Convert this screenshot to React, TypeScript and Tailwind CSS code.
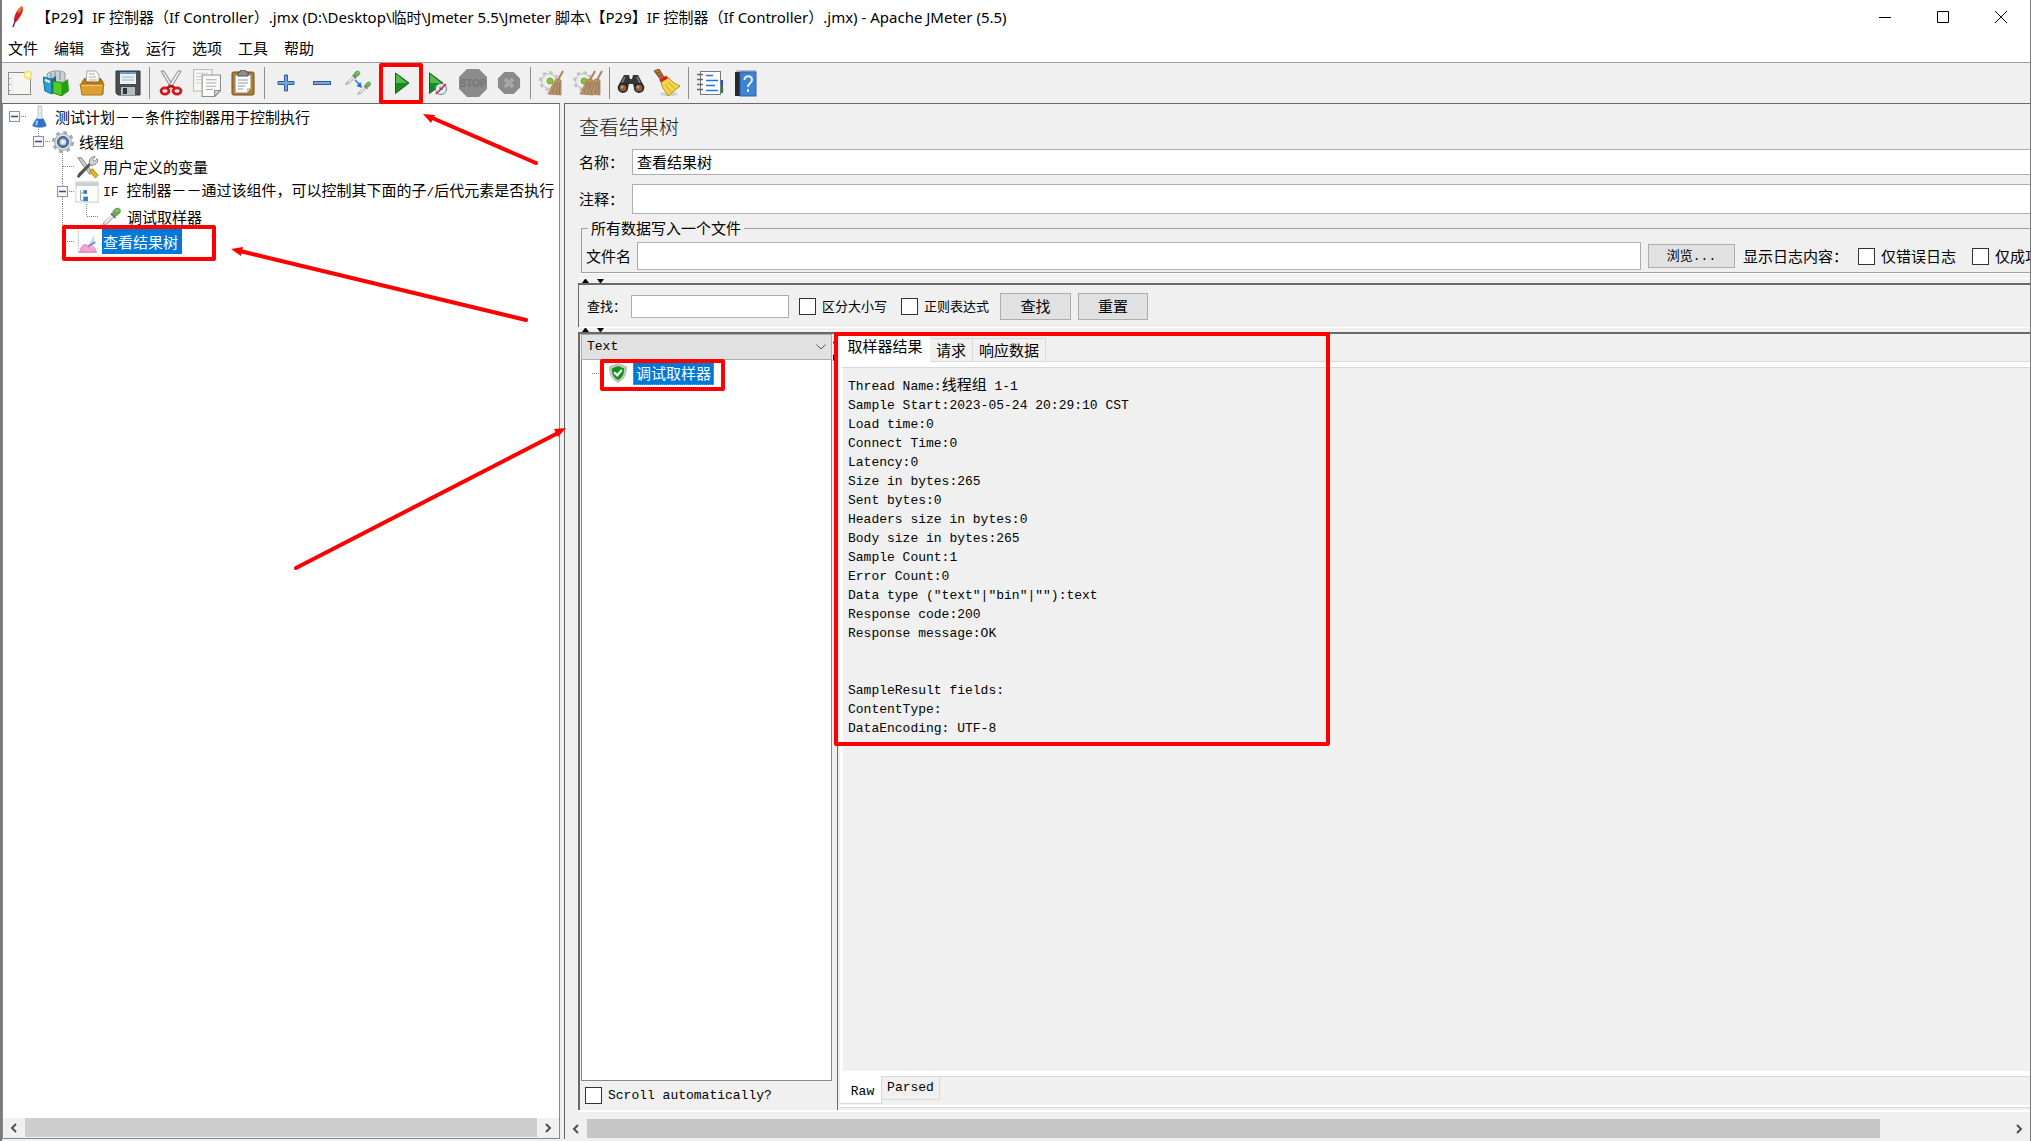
import React, { useState } from 'react'

const UI_FONT = "font-['Noto_Sans_CJK_SC',sans-serif]"
const MONO = "font-['Liberation_Mono','Noto_Sans_CJK_SC',monospace] text-[13px]"

const menus = ['文件', '编辑', '查找', '运行', '选项', '工具', '帮助']

/* ---------- toolbar icons ---------- */

const Svg = ({ size = 26, children }: { size?: number; children: React.ReactNode }) => (
  <svg width={size} height={size} viewBox="0 0 26 26" fill="none" aria-hidden="true">
    {children}
  </svg>
)

const Dropper = ({ x = 0, y = 0, s = 1 }: { x?: number; y?: number; s?: number }) => (
  <g transform={`translate(${x} ${y}) scale(${s})`}>
    <path d="M1 21 L3 17 L13 8 L15 10 L6 19 Z" fill="#d4d8d6" stroke="#8f9592" strokeWidth="1" />
    <path d="M5 17 L12 10" stroke="#fff" strokeWidth="1.4" />
    <path d="M11 7 L16 12" stroke="#6f7571" strokeWidth="2" />
    <path d="M13 8 C12 4 17 0 20 2 C23 4 20 9 15 10 Z" fill="#6bab58" stroke="#4d8641" strokeWidth=".8" />
    <path d="M16 5 L19 3.500" stroke="#b2d9a6" strokeWidth="1.200" />
  </g>
)

const Broom = ({ x = 0 }: { x?: number }) => (
  <g transform={`translate(${x} 0)`}>
    <path d="M24 1 L19 10" stroke="#a8835c" strokeWidth="2" />
    <path d="M17 9 L22 10 L22 25 L9 24 C12 19 13 14 17 9 Z" fill="#b9946b" stroke="#a3805a" strokeWidth=".8" />
    <path d="M17 12 L13 23 M19 12 L17 24 M21 12 L20 24" stroke="#8f6e4b" strokeWidth=".8" />
  </g>
)

const Gear = () => (
  <g>
    <circle cx="10" cy="11" r="7.500" fill="#e6e7e5" stroke="#c4c6c2" />
    <circle cx="10" cy="11" r="8.500" stroke="#c3c5c1" strokeWidth="3" strokeDasharray="3.400 3.270" />
    <circle cx="10" cy="11" r="6" fill="#eeefed" />
    <circle cx="11" cy="11" r="3" fill="#8cc63a" stroke="#74a233" />
  </g>
)

const NewIcon = () => (
  <Svg>
    <rect x="1.500" y="2.500" width="22" height="22" fill="#f5f5f4" stroke="#8a8c88" />
    <path d="M5 4v19" stroke="#e2e2e0" />
    <path d="M3 8v1M3 14v1M3 20v1" stroke="#666" />
    <circle cx="21" cy="5" r="4" fill="#f7ee88" stroke="#ebdf62" />
    <circle cx="21" cy="5" r="1.800" fill="#fffde0" />
  </Svg>
)

const TemplatesIcon = () => (
  <Svg>
    <path d="M4 4 C8 0 19 0 22 3 L22 12 L4 12 Z" fill="#c9d2d4" stroke="#8e999c" />
    <path d="M8 3v8M12 2v9M17 2v8" stroke="#7c898d" />
    <path d="M0 7 L8 9 L9 24 L2 21 Z" fill="#2f9ed0" stroke="#136b9b" />
    <path d="M8 9 L13 6 L13 22 L9 24 Z" fill="#176fa5" />
    <path d="M2 10 L7 12" stroke="#fff" strokeWidth="2" />
    <path d="M10 11 L19 13 L19 26 L10 23 Z" fill="#52cb27" stroke="#258b12" />
    <path d="M19 13 L25 9 L26 21 L19 26 Z" fill="#2b9a17" />
  </Svg>
)

const OpenIcon = () => (
  <Svg>
    <path d="M7 12 L8 1 L17 1 L20 5 L20 13 Z" fill="#fff" stroke="#a5a5a5" />
    <path d="M10 4h6M10 7h7M10 10h8" stroke="#aaa" />
    <path d="M3 12 L6 8 L7 12 L20 12 L21 8 L24 12 L24 24 L3 24 Z" fill="#b97f16" stroke="#936008" />
    <path d="M1 14 H25 L23 25 H3 Z" fill="#dca032" stroke="#ae7610" />
    <path d="M3 15.500H23" stroke="#f0c979" />
  </Svg>
)

const SaveIcon = () => (
  <Svg>
    <path d="M1 1 H25 V25 H3 L1 23 Z" fill="#4a4e53" stroke="#303336" />
    <rect x="5" y="2" width="16" height="12" fill="#e9f1f7" />
    <path d="M5 3h16" stroke="#6b9bcc" strokeWidth="2" />
    <path d="M7 7h12M7 10h12" stroke="#9db4c9" />
    <rect x="6" y="17" width="14" height="8" fill="#b7babc" />
    <rect x="8" y="18" width="4" height="6" fill="#303336" />
  </Svg>
)

const CutIcon = () => (
  <Svg>
    <path d="M3 1 L6 1 L16 17 L13 18 Z" fill="#e4e5e4" stroke="#858885" />
    <path d="M23 1 L20 1 L10 17 L13 18 Z" fill="#f3f3f2" stroke="#858885" />
    <ellipse cx="7" cy="21" rx="4" ry="3.200" stroke="#d01919" strokeWidth="2.800" />
    <ellipse cx="19" cy="21" rx="4" ry="3.200" stroke="#d01919" strokeWidth="2.800" />
    <path d="M9 18 L12 16 H14 L17 18" stroke="#c31414" strokeWidth="2.400" />
  </Svg>
)

const CopyIcon = () => (
  <Svg size={28}>
    <rect x=".500" y=".500" width="17" height="20" fill="#f7f7f6" stroke="#bcbcba" />
    <path d="M3 4h11M3 7h6M3 10h5M3 13h5" stroke="#ccc" />
    <path d="M8.500 5.500 H25.500 V20 L20 25.500 H8.500 Z" fill="#fafafa" stroke="#8d8f8b" />
    <path d="M12 10h10M12 13h10M12 16h9M12 19h6" stroke="#a9aaa8" />
    <path d="M20 25.500 V20 H25.500 Z" fill="#d4d5d3" stroke="#8d8f8b" />
  </Svg>
)

const PasteIcon = () => (
  <Svg>
    <rect x="2" y="2" width="22" height="23" rx="1.500" fill="#b77c28" stroke="#754b0e" />
    <path d="M5 5 H21 V18 L17 23 H5 Z" fill="#fbfbfa" stroke="#888" />
    <path d="M8 10h10M8 13h10M8 16h7M8 19h5" stroke="#999" />
    <path d="M8 2 H10 L11 0 H15 L16 2 H18 V6 H8 Z" fill="#8d908d" stroke="#555" />
    <path d="M17 23V18H21Z" fill="#ccc" />
  </Svg>
)

const PlusIcon = () => (
  <Svg>
    <path d="M11.500 5h3v6.500h6.500v3h-6.500v6.500h-3v-6.500H5v-3h6.500z" fill="#7ba4d6" stroke="#2f5e9f" />
  </Svg>
)

const MinusIcon = () => (
  <Svg>
    <rect x="4.500" y="11.500" width="17" height="3" fill="#7ba4d6" stroke="#2f5e9f" />
  </Svg>
)

const ToggleIcon = () => (
  <Svg>
    <Dropper x={0} y={0} s={0.7} />
    <Dropper x={12} y={11} s={0.65} />
    <path d="M10 10 L15 15" stroke="#2c7be8" strokeWidth="1.600" />
    <path d="M17 18 L11.500 16 L15.500 12 Z" fill="#1f6ee2" />
  </Svg>
)

const StartIcon = () => (
  <Svg>
    <path d="M7.500 3 L21 13 L7.500 23.500 Z" fill="#168d22" stroke="#0c6415" />
    <path d="M8 4 L19 13 L8 13 Z" fill="#57b851" />
  </Svg>
)

const StartNoPauseIcon = () => (
  <Svg>
    <path d="M5.500 3 L19 13 L5.500 23.500 Z" fill="#168d22" stroke="#0c6415" />
    <path d="M6 4 L17 13 L6 13 Z" fill="#57b851" />
    <circle cx="17" cy="19" r="5.500" fill="#e7eef5" stroke="#5386b5" />
    <path d="M16 16.500V19H19" stroke="#375f8b" />
    <path d="M12 24 L22 14" stroke="#d81e1e" strokeWidth="1.600" />
  </Svg>
)

const StopIcon = () => (
  <svg width="28" height="28" viewBox="0 0 28 28" aria-hidden="true">
    <path d="M8 0H20L28 8V20L20 28H8L0 20V8Z" fill="#8b8b8b" />
    <text x="14" y="18" textAnchor="middle" fontSize="10" fontWeight="700" fill="#757575" fontFamily="Liberation Sans, sans-serif">STOP</text>
  </svg>
)

const ShutdownIcon = () => (
  <Svg size={24}>
    <path d="M8 1H18L25 8V18L18 25H8L1 18V8Z" fill="#8a8a8a" />
    <path d="M8.500 8.500L17.500 17.500M17.500 8.500L8.500 17.500" stroke="#a8a8a8" strokeWidth="4" />
  </Svg>
)

const ClearIcon = () => (
  <Svg>
    <Gear />
    <Broom />
  </Svg>
)

const ClearAllIcon = () => (
  <svg width="30" height="26" viewBox="0 0 30 26" fill="none" aria-hidden="true">
    <Gear />
    <Broom x={-2} />
    <Broom x={5} />
  </svg>
)

const SearchIcon = () => (
  <svg width="30" height="26" viewBox="0 0 30 26" aria-hidden="true">
    <path d="M8 5 L13 5 L14 9 H16 L17 5 L22 5 L28 16 C30 22 20 25 18 18 L17 14 H13 L12 18 C10 25 0 22 2 16 Z" fill="#33373a" />
    <path d="M9 7 L6 13 M21 7 L24 13" stroke="#7d8386" strokeWidth="1.500" />
    <circle cx="7" cy="18" r="4.300" fill="#91573a" stroke="#202224" strokeWidth="1.500" />
    <circle cx="23" cy="18" r="4.300" fill="#91573a" stroke="#202224" strokeWidth="1.500" />
    <circle cx="6" cy="17" r="1.500" fill="#c99a7e" />
    <circle cx="22" cy="17" r="1.500" fill="#c99a7e" />
  </svg>
)

const SearchResetIcon = () => (
  <svg width="28" height="28" viewBox="0 0 28 28" fill="none" aria-hidden="true">
    <ellipse cx="16" cy="25" rx="9" ry="2" fill="#d0d0cd" />
    <path d="M1 2 L6 0 L11 8 L8 11 Z" fill="#b5783a" stroke="#7d4e1e" />
    <path d="M3 4h4M5 7h4" stroke="#704317" />
    <path d="M8 12 L15 8 C19 14 25 16 27 17 L15 27 C14 23 8 19 8 12 Z" fill="#f3d64b" stroke="#b28d12" />
    <path d="M12 15 L18 23 M15 13 L22 20" stroke="#c9a423" />
    <path d="M7 12 L14 8" stroke="#d42020" strokeWidth="3.400" />
  </svg>
)

const FunctionIcon = () => (
  <svg width="28" height="26" viewBox="0 0 28 26" fill="none" aria-hidden="true">
    <path d="M22 10h5v7h-5z" fill="#2758c9" />
    <path d="M22 17h5v6h-5z" fill="#149022" />
    <rect x="4.500" y="1.500" width="20" height="23" fill="#fff" stroke="#77797a" />
    <path d="M10 5.500h7M10 10.500h12M10 15.500h9M10 20.500h12" stroke="#2571d8" strokeWidth="1.600" />
    <path d="M1 4.500h6M1 9.500h6M1 14.500h6M1 19.500h6" stroke="#666" strokeWidth="1.600" />
  </svg>
)

const HelpIcon = () => (
  <svg width="24" height="28" viewBox="0 0 24 28" fill="none" aria-hidden="true">
    <path d="M2 1H22V4H2Z" fill="#b8bec5" />
    <rect x="1" y="3" width="6" height="24" fill="#24292f" />
    <rect x="6" y="3" width="16" height="24" fill="#3f82d2" stroke="#2a62a8" />
    <path d="M10.500 11C10.500 6 18 6 18 11C18 14 14 14 14 18" stroke="#e7f0fa" strokeWidth="2" />
    <rect x="13" y="20" width="2" height="3" fill="#e7f0fa" />
  </svg>
)

type Tool = { label: string; icon: React.FC } | null

const tools: Tool[] = [
  { label: '新建', icon: NewIcon },
  { label: '模板', icon: TemplatesIcon },
  { label: '打开', icon: OpenIcon },
  { label: '保存', icon: SaveIcon },
  null,
  { label: '剪切', icon: CutIcon },
  { label: '复制', icon: CopyIcon },
  { label: '粘贴', icon: PasteIcon },
  null,
  { label: '展开', icon: PlusIcon },
  { label: '折叠', icon: MinusIcon },
  { label: '切换', icon: ToggleIcon },
  null,
  { label: '启动', icon: StartIcon },
  { label: '不停顿启动', icon: StartNoPauseIcon },
  { label: '停止', icon: StopIcon },
  { label: '关闭', icon: ShutdownIcon },
  null,
  { label: '清除', icon: ClearIcon },
  { label: '清除全部', icon: ClearAllIcon },
  null,
  { label: '搜索', icon: SearchIcon },
  { label: '重置搜索', icon: SearchResetIcon },
  null,
  { label: '函数助手', icon: FunctionIcon },
  { label: '帮助', icon: HelpIcon },
]

/* ---------- test plan tree ---------- */

const PlanIcon = () => (
  <Svg size={24}>
    <path d="M12 1 H16 V12 L21 22 C21 25 6 25 6 22 L12 12 Z" fill="#e3e9ee" stroke="#b9c2ca" />
    <path d="M10 15 H18 L21 22 C21 25 6 25 6 22 Z" fill="#2c73cb" />
    <path d="M11 17 L10 22" stroke="#a9d0f6" strokeWidth="2" />
  </Svg>
)

const ThreadGroupIcon = () => (
  <Svg size={24}>
    <circle cx="13" cy="13" r="9" fill="#dfe1e3" stroke="#999da1" />
    <circle cx="13" cy="13" r="10.500" stroke="#a5a9ad" strokeWidth="3" strokeDasharray="4.100 4.147" />
    <circle cx="13" cy="13" r="6" fill="#54779f" stroke="#345784" />
    <circle cx="13" cy="13" r="3.600" fill="#b5d0ec" />
    <path d="M11.500 10.500 L16 13 L11.500 15.500Z" fill="#fff" />
  </Svg>
)

const ToolsIcon = () => (
  <Svg size={24}>
    <path d="M3 3 L7 3 L19 19 L16 21 Z" fill="#cfd1cf" stroke="#797c79" />
    <path d="M16 17 L19 15 L25 22 L22 25 Z" fill="#efb518" stroke="#a97805" />
    <path d="M3 24 L17 9 M4 22 L16 10" stroke="#4e5251" strokeWidth="3" />
    <path d="M16 10 C14 5 18 1 22 2 L19 5 L21 7 L24 4 C26 8 21 12 17 11Z" fill="#d3d5d3" stroke="#777b78" />
  </Svg>
)

const ControllerIcon = () => (
  <Svg size={24}>
    <rect x="1" y="2" width="24" height="22" fill="#fdfdfd" stroke="#c9cbcd" />
    <path d="M1 4.500H25" stroke="#ccd0d4" strokeWidth="4" />
    <path d="M6 11V22H9M6 14H9" stroke="#8aa" />
    <rect x="9" y="11" width="4" height="4" fill="#3a78c8" />
    <rect x="9" y="18" width="5" height="5" fill="#3a78c8" />
  </Svg>
)

const SamplerIcon = () => (
  <Svg size={24}>
    <Dropper x={2} y={2} />
  </Svg>
)

const ListenerIcon = () => (
  <Svg size={24}>
    <path d="M3.500 1V24.500H25" stroke="#aaa" strokeDasharray="2 1" />
    <path d="M5 24 C9 11 13 16 16 20 C19 15 22 20 23 24 Z" fill="#f2a5d2" stroke="#dd79b8" />
    <path d="M15 16 L21 5 V14 L18 20 Z" fill="#b9d9f5" />
    <path d="M14 18 L22 13" stroke="#9b7ad0" strokeWidth="2" />
  </Svg>
)

const ShieldIcon = () => (
  <Svg size={20}>
    <path d="M13 1 L24 5 C24 15 21 21 13 25 C5 21 2 15 2 5 Z" fill="#c6c9c6" stroke="#a3a7a3" />
    <path d="M13 4 L21 7 C21 14 19 19 13 22 C7 19 5 14 5 7 Z" fill="#129318" />
    <path d="M8 12 L12 16 L18 9" stroke="#fff" strokeWidth="3" />
  </Svg>
)

type Guide = 'blank' | 'through' | 'tee' | 'end' | 'root'

interface TreeNode {
  id: string
  guides: Guide[]
  expandable?: boolean
  icon: React.FC
  label: React.ReactNode
}

const nodes: TreeNode[] = [
  { id: 'plan', guides: ['root'], expandable: true, icon: PlanIcon, label: '测试计划－－条件控制器用于控制执行' },
  { id: 'group', guides: ['blank', 'end'], expandable: true, icon: ThreadGroupIcon, label: '线程组' },
  { id: 'vars', guides: ['blank', 'blank', 'tee'], icon: ToolsIcon, label: '用户定义的变量' },
  {
    id: 'if',
    guides: ['blank', 'blank', 'tee'],
    expandable: true,
    icon: ControllerIcon,
    label: (
      <>
        <span className={MONO}>IF </span>
        控制器－－通过该组件，可以控制其下面的子
        <span className={MONO}>/</span>
        后代元素是否执行
      </>
    ),
  },
  { id: 'debug', guides: ['blank', 'blank', 'through', 'end'], icon: SamplerIcon, label: '调试取样器' },
  { id: 'results', guides: ['blank', 'blank', 'end'], icon: ListenerIcon, label: '查看结果树' },
]

const guidePaths: Record<Guide, string> = {
  blank: '',
  root: 'M12 12.500H24',
  through: 'M11.500 0V25',
  tee: 'M11.500 0V25M12 12.500H24',
  end: 'M11.500 0V12M12 12.500H24',
}

const GuideCell = ({ type, box }: { type: Guide; box?: boolean }) => (
  <svg width="24" height="25" viewBox="0 0 24 25" fill="none" className="shrink-0" aria-hidden="true">
    <path d={guidePaths[type]} stroke="#808080" strokeDasharray="1 1" />
    {box && (
      <>
        <rect x="6.500" y="7.500" width="10" height="10" fill="#f6f6f6" stroke="#919191" />
        <path d="M8 12.500H15" stroke="#2b4e94" strokeWidth="1.500" />
      </>
    )}
  </svg>
)

/* ---------- small shared pieces ---------- */

const Chevron = ({ d }: { d: string }) => (
  <svg width="10" height="10" viewBox="0 0 10 10" fill="none" aria-hidden="true">
    <path d={d} stroke="#505050" strokeWidth="2" />
  </svg>
)

const HScroll = ({ thumb }: { thumb: string }) => (
  <div className="flex h-5 shrink-0 bg-[#f0f0f0]">
    <button aria-label="向左滚动" className="flex w-[22px] items-center justify-center">
      <Chevron d="M7 1L3 5L7 9" />
    </button>
    <div className="flex-1">
      <div className={`h-[19px] ${thumb}`} />
    </div>
    <button aria-label="向右滚动" className="flex w-[22px] items-center justify-center">
      <Chevron d="M3 1L7 5L3 9" />
    </button>
  </div>
)

const SplitHandle = () => (
  <div className="flex h-[5px] shrink-0 items-end border-t border-white pl-1">
    <svg width="22" height="4" viewBox="0 0 22 4" aria-hidden="true">
      <path d="M0 4L3 0H4L7 4ZM15 0H22L19 4H18Z" fill="#000" />
    </svg>
  </div>
)

const Check = ({ label, className = '' }: { label: React.ReactNode; className?: string }) => (
  <label className={`flex shrink-0 items-center gap-[6px] whitespace-nowrap ${className}`}>
    <input type="checkbox" className="size-[17px] shrink-0 appearance-none border border-[#333] bg-white checked:bg-[#0078d7]" />
    {label}
  </label>
)

const button = 'shrink-0 border border-[#adadad] bg-[#e1e1e1] text-center'
const input = 'min-w-0 border border-[#abadb3] bg-white px-1 outline-none'

const resultLines = [
  'Sample Start:2023-05-24 20:29:10 CST',
  'Load time:0',
  'Connect Time:0',
  'Latency:0',
  'Size in bytes:265',
  'Sent bytes:0',
  'Headers size in bytes:0',
  'Body size in bytes:265',
  'Sample Count:1',
  'Error Count:0',
  'Data type ("text"|"bin"|""):text',
  'Response code:200',
  'Response message:OK',
  '',
  '',
  'SampleResult fields:',
  'ContentType:',
  'DataEncoding: UTF-8',
]

const Annotations = () => (
  <svg className="pointer-events-none absolute -left-0.5 top-0" width="1340" height="760" viewBox="0 0 1340 760" fill="none" aria-hidden="true">
    <g stroke="#fe0000" strokeWidth="4" strokeLinecap="round" strokeLinejoin="round">
      <rect x="381" y="65" width="40" height="37" />
      <rect x="64" y="227" width="150" height="32" />
      <rect x="602" y="361" width="121" height="28" />
      <rect x="836" y="334" width="492" height="410" />
      <path d="M430 117L536 163M240 251L526 320M296 568L558 433" />
    </g>
    <g fill="#fe0000">
      <path d="M423 114L435 115L431 123Z" />
      <path d="M231 249L243 247L241 256Z" />
      <path d="M566 428L558 437L554 429Z" />
    </g>
  </svg>
)

const ResultPane = () => {
  const [tab, setTab] = useState(0)

  return (
    <div className="flex min-w-0 flex-1 flex-col border-l border-[#696969] pl-[2px]">
      <div className="flex items-end">
        <button onClick={() => setTab(0)} className="h-7 w-[90px] bg-white pb-1">取样器结果</button>
        {['请求', '响应数据'].map((name, i) => (
          <button
            key={name}
            onClick={() => setTab(i + 1)}
            className="h-6 border border-l-0 border-[#d9d9d9] px-[6px] leading-5"
          >
            {name}
          </button>
        ))}
        <div className="flex-1 self-end border-b border-[#d9d9d9]" />
      </div>
      <div className="h-[5px] shrink-0 bg-white" />
      <pre
        data-tab={tab}
        className={`flex-1 border-l-[3px] border-t border-l-white border-t-[#d9d9d9] py-[9px] pl-[5px] leading-[19px] ${MONO}`}
      >
        Thread Name:<span className="text-[15px] leading-none">线程组</span> 1-1{'\n'}
        {resultLines.join('\n')}
      </pre>
      <div className="h-[5px] shrink-0 bg-white" />
      <div className={`flex shrink-0 items-start ${MONO}`}>
        <button className="h-7 w-[42px] border-r border-b border-[#d9d9d9] bg-white pl-1 pt-1">Raw</button>
        <button className="h-6 w-[58px] border border-l-0 border-[#d9d9d9]">Parsed</button>
        <div className="flex-1 border-t border-[#d9d9d9]" />
      </div>
      <div className="mb-[2px] mt-[1px] h-[3px] shrink-0 border-b border-[#d9d9d9] bg-white" />
    </div>
  )
}

export default function App() {
  const [selected, setSelected] = useState('results')

  return (
    <div className={`relative flex h-screen w-full flex-col overflow-hidden border-l-2 border-r border-[#7a7a7a] bg-white text-[15px] leading-5 text-black ${UI_FONT}`}>
      {/* Title bar */}
      <header className="flex h-[34px] shrink-0 items-center">
        <svg width="12" height="22" viewBox="0 0 12 22" className="ml-[10px] mr-3 shrink-0" aria-hidden="true">
          <path d="M10 0C13 4 8 12 4 16L2 15C2 9 5 3 10 0Z" fill="#d22128" />
          <path d="M10 0C11 2 9 5 7 7L5 6C6 3 8 1 10 0Z" fill="#ee7623" />
          <path d="M4 13L1 21" stroke="#6d2770" strokeWidth="1.500" />
        </svg>
        <h1 className="flex-1 truncate font-['Noto_Sans','Noto_Sans_CJK_SC',sans-serif] text-[15px]">
          【P29】IF 控制器（If Controller）.jmx (D:\Desktop\临时\Jmeter 5.5\Jmeter 脚本\【P29】IF 控制器（If Controller）.jmx) - Apache JMeter (5.5)
        </h1>
        <div className="flex">
          {['M0 7.500H12', 'M.500 1.500H11.500V12.500H.500Z', 'M0 1L12 13M12 1L0 13'].map((d, i) => (
            <button key={d} aria-label={['最小化', '最大化', '关闭'][i]} className="flex h-8 w-[58px] items-center justify-center">
              <svg width="12" height="14" viewBox="0 0 12 14" fill="none" aria-hidden="true">
                <path d={d} stroke="#000" />
              </svg>
            </button>
          ))}
        </div>
      </header>

      {/* Menu bar */}
      <nav className="flex h-7 shrink-0 items-start gap-4 pl-[6px] pt-[2px]">
        {menus.map((name) => (
          <button key={name} className="h-6">{name}</button>
        ))}
      </nav>

      {/* Toolbar */}
      <div className="flex h-[41px] shrink-0 items-center border-t border-[#a0a0a0] bg-[#f0f0f0]">
        {tools.map((tool, i) =>
          tool ? (
            <button key={i} aria-label={tool.label} className="flex h-9 w-9 items-center justify-center">
              <tool.icon />
            </button>
          ) : (
            <div key={i} className="flex w-[7px] justify-center">
              <div className="h-8 w-px bg-[#8f8f8f]" />
            </div>
          )
        )}
      </div>

      <div className="flex min-h-0 flex-1 bg-[#f0f0f0] pb-[2px]">
        {/* Test plan tree */}
        <aside className="flex w-[558px] shrink-0 flex-col border border-[#828790] border-t-[#696969] bg-white">
          <ul className="flex-1 overflow-hidden">
            {nodes.map((node) => (
              <li key={node.id} className="flex h-[25px] items-center whitespace-nowrap">
                {node.guides.map((g, i) => (
                  <GuideCell key={i} type={g} box={node.expandable && i === node.guides.length - 1} />
                ))}
                <node.icon />
                <button
                  onClick={() => setSelected(node.id)}
                  className={
                    selected === node.id
                      ? 'ml-[3px] h-[25px] bg-[#0078d7] pl-[1px] pr-1 text-white'
                      : 'ml-[3px] h-[25px] pl-[1px] pr-1'
                  }
                >
                  {node.label}
                </button>
              </li>
            ))}
          </ul>
          <HScroll thumb="w-full bg-[#cdcdcd]" />
        </aside>

        {/* Listener panel */}
        <main className="ml-[4px] flex min-w-0 flex-1 flex-col border-l border-t border-[#696969]">
          <div className="flex min-h-0 flex-1 flex-col overflow-hidden pl-[13px] pt-[13px]">
            <h2 className="h-8 shrink-0 pl-[1px] text-xl leading-5 font-light text-[#222]">查看结果树</h2>
            <div className="flex shrink-0 items-center">
              <label htmlFor="name" className="w-[54px] pl-[1px]">名称：</label>
              <input id="name" defaultValue="查看结果树" className={`h-[26px] flex-1 border-r-0 pb-[2px] ${input}`} />
            </div>
            <div className="mt-[9px] flex shrink-0 items-center">
              <label htmlFor="comment" className="w-[54px] pl-[1px]">注释：</label>
              <input id="comment" className={`h-[30px] flex-1 border-r-0 ${input}`} />
            </div>

            <fieldset className="ml-[3px] mt-1 min-w-0 shrink-0 border border-r-0 border-[#a0a0a0] pb-[2px] pl-[4px] pt-1 shadow-[0_1px_0_#fff]">
              <legend className="ml-[2px] px-[3px]">所有数据写入一个文件</legend>
              <div className="flex items-center overflow-hidden whitespace-nowrap">
                <label htmlFor="file" className="w-[51px] shrink-0">文件名</label>
                <input id="file" className={`h-7 flex-1 ${input}`} />
                <button className={`ml-[7px] h-6 w-[87px] text-[13px] leading-5 ${button}`}>
                  浏览<span className={MONO}>...</span>
                </button>
                <span className="ml-2 w-[115px] shrink-0">显示日志内容：</span>
                <Check label="仅错误日志" />
                <div className="ml-4 w-[58px] shrink-0 overflow-hidden">
                  <Check label="仅成功日志" />
                </div>
              </div>
            </fieldset>

            <div className="mt-[5px] shrink-0"><SplitHandle /></div>
            <form onSubmit={(e) => e.preventDefault()} className="flex h-[44px] shrink-0 items-center border-l border-t-2 border-[#696969] pl-2 text-[13px]">
              <label htmlFor="search" className="w-[44px]">查找：</label>
              <input id="search" className={`h-[23px] w-[158px] ${input}`} />
              <Check label="区分大小写" className="ml-[10px]" />
              <Check label="正则表达式" className="ml-[14px]" />
              <button className={`ml-[11px] h-[27px] w-[71px] text-[15px] ${button}`}>查找</button>
              <button className={`ml-[7px] h-[27px] w-[70px] text-[15px] ${button}`}>重置</button>
            </form>
            <SplitHandle />

            <div className="flex min-h-0 flex-1 border-l-2 border-t-2 border-[#696969]">
              <div className="flex w-[252px] shrink-0 flex-col pl-[1px]">
                <div className="relative">
                  <select aria-label="渲染器" className={`block h-[26px] w-full appearance-none border border-[#adadad] bg-[#e1e1e1] pl-[5px] ${MONO}`}>
                    <option>Text</option>
                  </select>
                  <svg width="10" height="6" viewBox="0 0 10 6" fill="none" className="pointer-events-none absolute right-[6px] top-[10px]" aria-hidden="true">
                    <path d="M.500 .500L5 5L9.500 .500" stroke="#555" />
                  </svg>
                </div>
                <ul className="flex-1 border border-t-0 border-[#828790] bg-white pt-[1px]">
                  <li className="flex h-6 items-center pl-[10px]">
                    <div className="mr-[9px] w-[7px] border-t border-dotted border-[#808080]" />
                    <ShieldIcon />
                    <button className="ml-[5px] h-6 border border-dotted border-[#ff8728] bg-[#0078d7] pl-[2px] pr-[2px] text-white">调试取样器</button>
                  </li>
                </ul>
                <div className={`flex h-[29px] shrink-0 items-center pl-1 ${MONO}`}>
                  <Check label="Scroll automatically?" />
                </div>
              </div>
              <div className="w-[5px] shrink-0 pt-[6px]">
                <svg width="5" height="22" viewBox="0 0 5 22" aria-hidden="true">
                  <path d="M4 0V5L1 3V2ZM1 14V21L4 18V17Z" fill="#000" />
                </svg>
              </div>
              <ResultPane />
            </div>
            <div className="h-[9px] shrink-0 border-t-2 border-white" />
          </div>
          <HScroll thumb="w-[91%] bg-[#c6c6c6]" />
        </main>
      </div>
      <Annotations />
    </div>
  )
}
